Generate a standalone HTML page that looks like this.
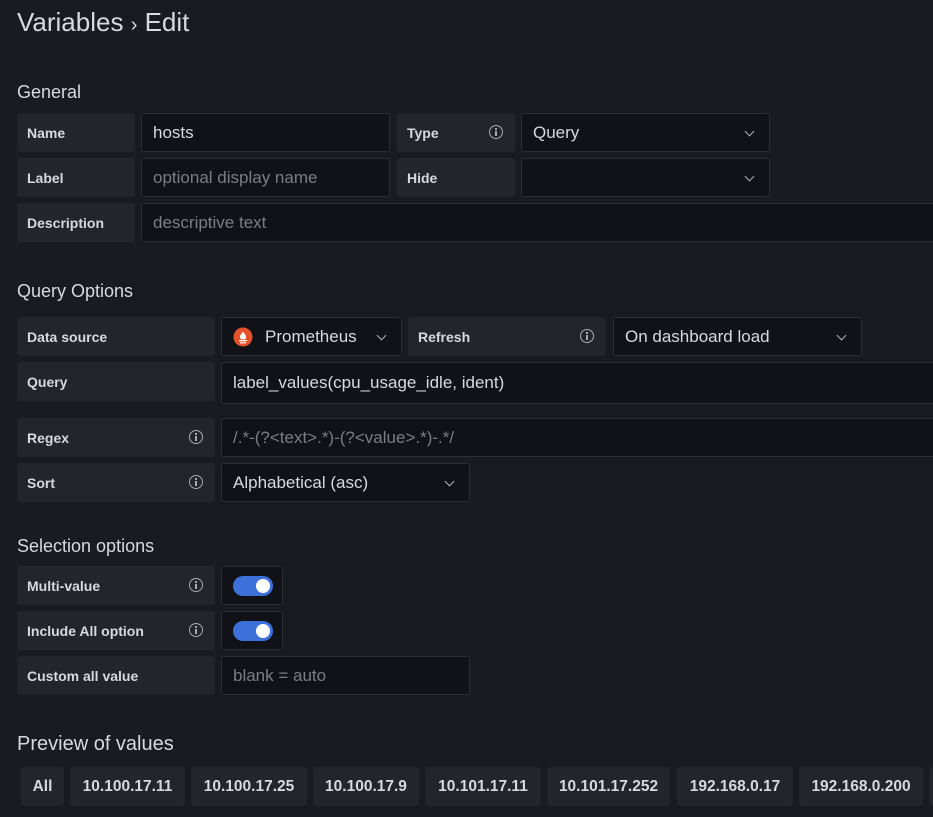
<!DOCTYPE html>
<html><head><style>
*{box-sizing:border-box;margin:0;padding:0}
body{width:933px;height:817px;background:#181b1f;overflow:hidden;position:relative;font-family:"Liberation Sans",Arial,sans-serif;color:#ccccdc}
.a{position:absolute}
.lbl{position:absolute;background:#22252b;border-radius:3px;font-size:14px;font-weight:bold;color:#d8d9e0;padding-left:10px;display:flex;align-items:center;height:39px}
.inp{position:absolute;background:#111217;border:1px solid #2c2f36;border-radius:3px;font-size:17px;color:#d8d9e0;padding-left:11px;display:flex;align-items:center;height:39px;white-space:nowrap;overflow:hidden}
.ph{color:#7a7d85}
.h{position:absolute;left:17px;font-size:18px;color:#d8d9e0}
.info{position:absolute;right:12px;top:12px;width:14px;height:14px;border:1.3px solid #a8aab2;border-radius:50%}
.info:before{content:"";position:absolute;left:5px;top:5px;width:1.5px;height:5px;background:#a8aab2}
.info:after{content:"";position:absolute;left:5px;top:2px;width:1.5px;height:1.5px;background:#a8aab2}
.chev{position:absolute;right:16px;top:14px;width:7px;height:7px;border-right:1.5px solid #b0b2ba;border-bottom:1.5px solid #b0b2ba;transform:rotate(45deg)}
.sw{position:absolute;width:62px;height:39px;background:#111217;border:1px solid #2c2f36;border-radius:3px}
.sw i{position:absolute;left:11px;top:9px;width:40px;height:20px;background:#3d71d9;border-radius:10px}
.sw i:after{content:"";position:absolute;right:3px;top:3px;width:14px;height:14px;background:#fff;border-radius:50%}
.chip{position:absolute;top:767px;height:39px;background:#22252b;border-radius:3px;font-size:15.5px;font-weight:bold;color:#d8d9e0;display:flex;align-items:center;justify-content:center}
</style></head><body>
<div class="a" style="left:17px;top:7px;font-size:26px;color:#d8d9e0">Variables <span style="font-size:20px">›</span> Edit</div>
<div class="h" style="top:82px">General</div>
<div class="lbl" style="left:17px;top:113px;width:118px">Name</div>
<div class="inp" style="left:141px;top:113px;width:249px">hosts</div>
<div class="lbl" style="left:397px;top:113px;width:118px">Type<span class="info"></span></div>
<div class="inp" style="left:521px;top:113px;width:249px">Query<span class="chev"></span></div>
<div class="lbl" style="left:17px;top:158px;width:118px">Label</div>
<div class="inp" style="left:141px;top:158px;width:249px"><span class="ph">optional display name</span></div>
<div class="lbl" style="left:397px;top:158px;width:118px">Hide</div>
<div class="inp" style="left:521px;top:158px;width:249px"><span class="chev"></span></div>
<div class="lbl" style="left:17px;top:203px;width:118px">Description</div>
<div class="inp" style="left:141px;top:203px;width:800px"><span class="ph">descriptive text</span></div>

<div class="h" style="top:281px">Query Options</div>
<div class="lbl" style="left:17px;top:317px;width:198px">Data source</div>
<div class="inp" style="left:221px;top:317px;width:181px"><svg width="20" height="20" viewBox="0 0 20 20" style="margin-right:12px"><circle cx="10" cy="10" r="9.5" fill="#e6522c"/><path d="M6 13h8v1.3H6zM7 15.2h6v1.2H7zM10 4c0 2-3 3-3 6 0 1.5 1 2.3 1 2.3h4s1-.8 1-2.3c0-3-3-4-3-6z" fill="#fff"/></svg>Prometheus<span class="chev"></span></div>
<div class="lbl" style="left:408px;top:317px;width:198px">Refresh<span class="info"></span></div>
<div class="inp" style="left:613px;top:317px;width:249px">On dashboard load<span class="chev"></span></div>
<div class="lbl" style="left:17px;top:362px;width:198px">Query</div>
<div class="inp" style="left:221px;top:362px;width:720px;height:42px">label_values(cpu_usage_idle, ident)</div>
<div class="lbl" style="left:17px;top:418px;width:198px">Regex<span class="info"></span></div>
<div class="inp" style="left:221px;top:418px;width:720px"><span class="ph">/.*-(?&lt;text&gt;.*)-(?&lt;value&gt;.*)-.*/</span></div>
<div class="lbl" style="left:17px;top:463px;width:198px">Sort<span class="info"></span></div>
<div class="inp" style="left:221px;top:463px;width:249px">Alphabetical (asc)<span class="chev"></span></div>

<div class="h" style="top:536px">Selection options</div>
<div class="lbl" style="left:17px;top:566px;width:198px">Multi-value<span class="info"></span></div>
<div class="sw" style="left:221px;top:566px"><i></i></div>
<div class="lbl" style="left:17px;top:611px;width:198px">Include All option<span class="info"></span></div>
<div class="sw" style="left:221px;top:611px"><i></i></div>
<div class="lbl" style="left:17px;top:656px;width:198px">Custom all value</div>
<div class="inp" style="left:221px;top:656px;width:249px"><span class="ph">blank = auto</span></div>

<div class="a" style="left:17px;top:733px;font-size:20px;color:#d8d9e0">Preview of values</div>
<div class="chip" style="left:21px;width:43px">All</div>
<div class="chip" style="left:70px;width:115px">10.100.17.11</div>
<div class="chip" style="left:191px;width:116px">10.100.17.25</div>
<div class="chip" style="left:313px;width:106px">10.100.17.9</div>
<div class="chip" style="left:425px;width:116px">10.101.17.11</div>
<div class="chip" style="left:547px;width:123px">10.101.17.252</div>
<div class="chip" style="left:677px;width:116px">192.168.0.17</div>
<div class="chip" style="left:799px;width:124px">192.168.0.200</div>
<div class="chip" style="left:929px;width:60px"></div>
</body></html>
